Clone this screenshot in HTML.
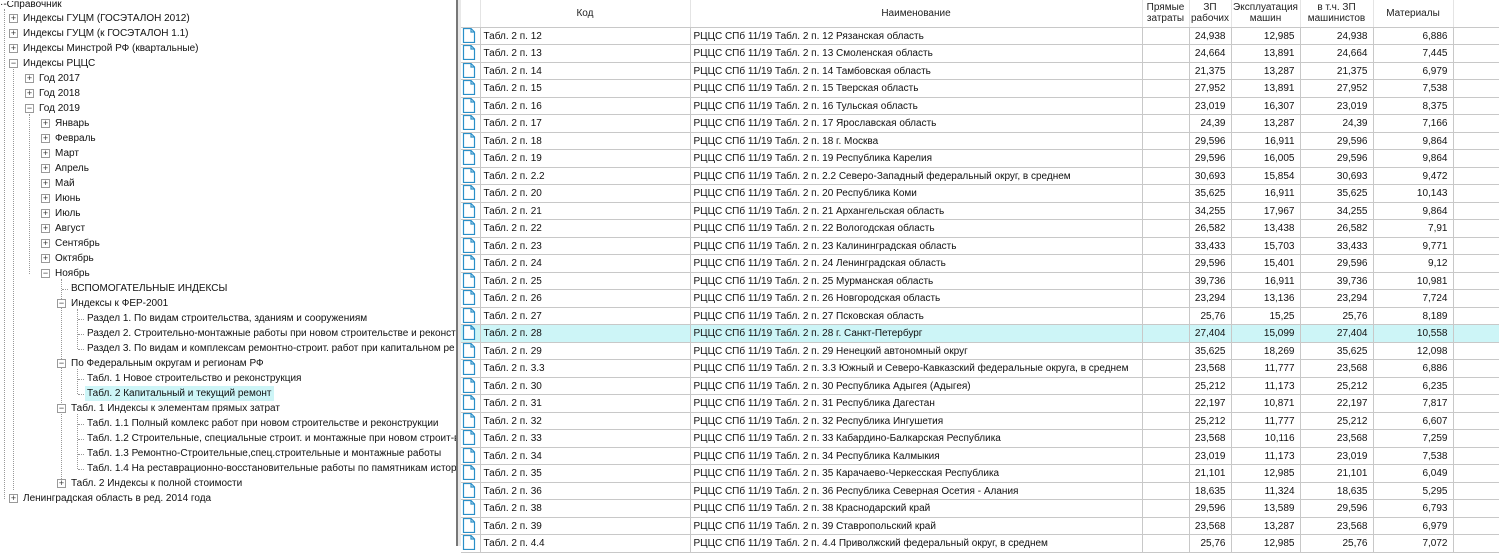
<!DOCTYPE html>
<html><head><meta charset="utf-8"><style>
*{margin:0;padding:0;box-sizing:border-box}
body{width:1499px;height:546px;overflow:hidden;background:#fff;font-family:"Liberation Sans","DejaVu Sans",sans-serif;font-size:10px;color:#111;position:relative}
#tree{position:absolute;left:0;top:1px;width:456px;height:546px;overflow:hidden}
.n{position:absolute;white-space:nowrap;height:15px;line-height:15px}
.b{position:absolute;width:9px;height:9px;border:1px solid #9a9a9a;background:#fff;font-size:9px;line-height:7px;text-align:center;color:#333}
.vl{position:absolute;border-left:1px dotted #999}
.hl{position:absolute;border-top:1px dotted #999;width:6px}
#split1{position:absolute;left:456px;top:0;width:2px;height:546px;background:#777}
#split2{position:absolute;left:458px;top:0;width:3px;height:546px;background:#e8e8e8}
#grid{position:absolute;left:461px;top:0}
table{border-collapse:collapse;table-layout:fixed;width:1038px}
th{height:27px;font-weight:normal;font-size:10px;line-height:11px;color:#222;border-right:1px solid #e4e4e4;border-bottom:1px solid #c8c8c8;background:#fff;overflow:hidden;white-space:nowrap}
td{height:17.5px;border-right:1px solid #c8c8c8;border-bottom:1px solid #c8c8c8;padding:1px 3px 0;white-space:nowrap;overflow:hidden}
td.r{text-align:right;padding-right:5px}
td.i{padding:0 1px;border-right:1px solid #c8c8c8}
tr.s td{background:#cdf5f7}
.ic{display:inline-block;width:14px;height:15px;vertical-align:middle;margin-top:-1px}
</style></head><body>
<div id="tree">
<div class="vl" style="left:4px;top:8px;height:490px"></div>
<div class="n" style="left:0;top:-4px">·-Справочник</div>
<div class="b" style="left:9px;top:13px">+</div><div class="n" style="left:23px;top:10px">Индексы ГУЦМ (ГОСЭТАЛОН 2012)</div>
<div class="b" style="left:9px;top:28px">+</div><div class="n" style="left:23px;top:25px">Индексы ГУЦМ (к ГОСЭТАЛОН 1.1)</div>
<div class="b" style="left:9px;top:43px">+</div><div class="n" style="left:23px;top:40px">Индексы Минстрой РФ (квартальные)</div>
<div class="b" style="left:9px;top:58px">−</div><div class="n" style="left:23px;top:55px">Индексы РЦЦС</div>
<div class="vl" style="left:13px;top:68px;height:421px"></div>
<div class="b" style="left:25px;top:73px">+</div><div class="n" style="left:39px;top:70px">Год 2017</div>
<div class="b" style="left:25px;top:88px">+</div><div class="n" style="left:39px;top:85px">Год 2018</div>
<div class="b" style="left:25px;top:103px">−</div><div class="n" style="left:39px;top:100px">Год 2019</div>
<div class="vl" style="left:29px;top:113px;height:160px"></div>
<div class="b" style="left:41px;top:118px">+</div><div class="n" style="left:55px;top:115px">Январь</div>
<div class="b" style="left:41px;top:133px">+</div><div class="n" style="left:55px;top:130px">Февраль</div>
<div class="b" style="left:41px;top:148px">+</div><div class="n" style="left:55px;top:145px">Март</div>
<div class="b" style="left:41px;top:163px">+</div><div class="n" style="left:55px;top:160px">Апрель</div>
<div class="b" style="left:41px;top:178px">+</div><div class="n" style="left:55px;top:175px">Май</div>
<div class="b" style="left:41px;top:193px">+</div><div class="n" style="left:55px;top:190px">Июнь</div>
<div class="b" style="left:41px;top:208px">+</div><div class="n" style="left:55px;top:205px">Июль</div>
<div class="b" style="left:41px;top:223px">+</div><div class="n" style="left:55px;top:220px">Август</div>
<div class="b" style="left:41px;top:238px">+</div><div class="n" style="left:55px;top:235px">Сентябрь</div>
<div class="b" style="left:41px;top:253px">+</div><div class="n" style="left:55px;top:250px">Октябрь</div>
<div class="b" style="left:41px;top:268px">−</div><div class="n" style="left:55px;top:265px">Ноябрь</div>
<div class="vl" style="left:61px;top:278px;height:206px"></div>
<div class="hl" style="left:62px;top:288px"></div><div class="n" style="left:71px;top:280px">ВСПОМОГАТЕЛЬНЫЕ ИНДЕКСЫ</div>
<div class="b" style="left:57px;top:298px">−</div><div class="n" style="left:71px;top:295px">Индексы к ФЕР-2001</div>
<div class="vl" style="left:77px;top:308px;height:40px"></div>
<div class="hl" style="left:78px;top:318px"></div><div class="n" style="left:87px;top:310px">Раздел 1. По видам строительства, зданиям и сооружениям</div>
<div class="hl" style="left:78px;top:333px"></div><div class="n" style="left:87px;top:325px">Раздел 2. Строительно-монтажные работы при новом строительстве и реконстр</div>
<div class="hl" style="left:78px;top:348px"></div><div class="n" style="left:87px;top:340px">Раздел 3. По видам и комплексам ремонтно-строит. работ при капитальном ре</div>
<div class="b" style="left:57px;top:358px">−</div><div class="n" style="left:71px;top:355px">По Федеральным округам и регионам РФ</div>
<div class="vl" style="left:77px;top:368px;height:25px"></div>
<div class="hl" style="left:78px;top:378px"></div><div class="n" style="left:87px;top:370px">Табл. 1 Новое строительство и реконструкция</div>
<div class="hl" style="left:78px;top:393px"></div><div class="n" style="left:85px;top:385px;background:#cdf5f7;padding:0 2px">Табл. 2 Капитальный и текущий ремонт</div>
<div class="b" style="left:57px;top:403px">−</div><div class="n" style="left:71px;top:400px">Табл. 1 Индексы к элементам прямых затрат</div>
<div class="vl" style="left:77px;top:413px;height:55px"></div>
<div class="hl" style="left:78px;top:423px"></div><div class="n" style="left:87px;top:415px">Табл. 1.1 Полный комлекс работ при новом строительстве и реконструкции</div>
<div class="hl" style="left:78px;top:438px"></div><div class="n" style="left:87px;top:430px">Табл. 1.2 Строительные, специальные строит. и монтажные при новом строит-в</div>
<div class="hl" style="left:78px;top:453px"></div><div class="n" style="left:87px;top:445px">Табл. 1.3 Ремонтно-Строительные,спец.строительные и монтажные работы</div>
<div class="hl" style="left:78px;top:468px"></div><div class="n" style="left:87px;top:460px">Табл. 1.4 На реставрационно-восстановительные работы по памятникам истор</div>
<div class="b" style="left:57px;top:478px">+</div><div class="n" style="left:71px;top:475px">Табл. 2 Индексы к полной стоимости</div>
<div class="b" style="left:9px;top:493px">+</div><div class="n" style="left:23px;top:490px">Ленинградская область в ред. 2014 года</div>
</div>
<div id="split1"></div><div id="split2"></div>
<svg width="0" height="0" style="position:absolute"><defs><symbol id="d" viewBox="0 0 14 15"><path d="M1.5 0.5H9L12.5 4V14.5H1.5Z M9 0.5V4H12.5" fill="#fff" stroke="#2a8fc8" stroke-width="1.2"/></symbol></defs></svg>
<div id="grid"><table>
<colgroup><col style="width:19px"><col style="width:210px"><col style="width:452px"><col style="width:47px"><col style="width:42px"><col style="width:69px"><col style="width:73px"><col style="width:80px"><col style="width:46px"></colgroup>
<tr><th></th><th>Код</th><th>Наименование</th><th>Прямые<br>затраты</th><th>ЗП<br>рабочих</th><th>Эксплуатация<br>машин</th><th>в т.ч. ЗП<br>машинистов</th><th>Материалы</th><th></th></tr>
<tr><td class="i"><svg class="ic"><use href="#d"/></svg></td><td>Табл. 2 п. 12</td><td>РЦЦС СПб 11/19 Табл. 2 п. 12 Рязанская область</td><td></td><td class="r">24,938</td><td class="r">12,985</td><td class="r">24,938</td><td class="r">6,886</td><td></td></tr>
<tr><td class="i"><svg class="ic"><use href="#d"/></svg></td><td>Табл. 2 п. 13</td><td>РЦЦС СПб 11/19 Табл. 2 п. 13 Смоленская область</td><td></td><td class="r">24,664</td><td class="r">13,891</td><td class="r">24,664</td><td class="r">7,445</td><td></td></tr>
<tr><td class="i"><svg class="ic"><use href="#d"/></svg></td><td>Табл. 2 п. 14</td><td>РЦЦС СПб 11/19 Табл. 2 п. 14 Тамбовская область</td><td></td><td class="r">21,375</td><td class="r">13,287</td><td class="r">21,375</td><td class="r">6,979</td><td></td></tr>
<tr><td class="i"><svg class="ic"><use href="#d"/></svg></td><td>Табл. 2 п. 15</td><td>РЦЦС СПб 11/19 Табл. 2 п. 15 Тверская область</td><td></td><td class="r">27,952</td><td class="r">13,891</td><td class="r">27,952</td><td class="r">7,538</td><td></td></tr>
<tr><td class="i"><svg class="ic"><use href="#d"/></svg></td><td>Табл. 2 п. 16</td><td>РЦЦС СПб 11/19 Табл. 2 п. 16 Тульская область</td><td></td><td class="r">23,019</td><td class="r">16,307</td><td class="r">23,019</td><td class="r">8,375</td><td></td></tr>
<tr><td class="i"><svg class="ic"><use href="#d"/></svg></td><td>Табл. 2 п. 17</td><td>РЦЦС СПб 11/19 Табл. 2 п. 17 Ярославская область</td><td></td><td class="r">24,39</td><td class="r">13,287</td><td class="r">24,39</td><td class="r">7,166</td><td></td></tr>
<tr><td class="i"><svg class="ic"><use href="#d"/></svg></td><td>Табл. 2 п. 18</td><td>РЦЦС СПб 11/19 Табл. 2 п. 18 г. Москва</td><td></td><td class="r">29,596</td><td class="r">16,911</td><td class="r">29,596</td><td class="r">9,864</td><td></td></tr>
<tr><td class="i"><svg class="ic"><use href="#d"/></svg></td><td>Табл. 2 п. 19</td><td>РЦЦС СПб 11/19 Табл. 2 п. 19 Республика Карелия</td><td></td><td class="r">29,596</td><td class="r">16,005</td><td class="r">29,596</td><td class="r">9,864</td><td></td></tr>
<tr><td class="i"><svg class="ic"><use href="#d"/></svg></td><td>Табл. 2 п. 2.2</td><td>РЦЦС СПб 11/19 Табл. 2 п. 2.2 Северо-Западный федеральный округ, в среднем</td><td></td><td class="r">30,693</td><td class="r">15,854</td><td class="r">30,693</td><td class="r">9,472</td><td></td></tr>
<tr><td class="i"><svg class="ic"><use href="#d"/></svg></td><td>Табл. 2 п. 20</td><td>РЦЦС СПб 11/19 Табл. 2 п. 20 Республика Коми</td><td></td><td class="r">35,625</td><td class="r">16,911</td><td class="r">35,625</td><td class="r">10,143</td><td></td></tr>
<tr><td class="i"><svg class="ic"><use href="#d"/></svg></td><td>Табл. 2 п. 21</td><td>РЦЦС СПб 11/19 Табл. 2 п. 21 Архангельская область</td><td></td><td class="r">34,255</td><td class="r">17,967</td><td class="r">34,255</td><td class="r">9,864</td><td></td></tr>
<tr><td class="i"><svg class="ic"><use href="#d"/></svg></td><td>Табл. 2 п. 22</td><td>РЦЦС СПб 11/19 Табл. 2 п. 22 Вологодская область</td><td></td><td class="r">26,582</td><td class="r">13,438</td><td class="r">26,582</td><td class="r">7,91</td><td></td></tr>
<tr><td class="i"><svg class="ic"><use href="#d"/></svg></td><td>Табл. 2 п. 23</td><td>РЦЦС СПб 11/19 Табл. 2 п. 23 Калининградская область</td><td></td><td class="r">33,433</td><td class="r">15,703</td><td class="r">33,433</td><td class="r">9,771</td><td></td></tr>
<tr><td class="i"><svg class="ic"><use href="#d"/></svg></td><td>Табл. 2 п. 24</td><td>РЦЦС СПб 11/19 Табл. 2 п. 24 Ленинградская область</td><td></td><td class="r">29,596</td><td class="r">15,401</td><td class="r">29,596</td><td class="r">9,12</td><td></td></tr>
<tr><td class="i"><svg class="ic"><use href="#d"/></svg></td><td>Табл. 2 п. 25</td><td>РЦЦС СПб 11/19 Табл. 2 п. 25 Мурманская область</td><td></td><td class="r">39,736</td><td class="r">16,911</td><td class="r">39,736</td><td class="r">10,981</td><td></td></tr>
<tr><td class="i"><svg class="ic"><use href="#d"/></svg></td><td>Табл. 2 п. 26</td><td>РЦЦС СПб 11/19 Табл. 2 п. 26 Новгородская область</td><td></td><td class="r">23,294</td><td class="r">13,136</td><td class="r">23,294</td><td class="r">7,724</td><td></td></tr>
<tr><td class="i"><svg class="ic"><use href="#d"/></svg></td><td>Табл. 2 п. 27</td><td>РЦЦС СПб 11/19 Табл. 2 п. 27 Псковская область</td><td></td><td class="r">25,76</td><td class="r">15,25</td><td class="r">25,76</td><td class="r">8,189</td><td></td></tr>
<tr class="s"><td class="i"><svg class="ic"><use href="#d"/></svg></td><td>Табл. 2 п. 28</td><td>РЦЦС СПб 11/19 Табл. 2 п. 28 г. Санкт-Петербург</td><td></td><td class="r">27,404</td><td class="r">15,099</td><td class="r">27,404</td><td class="r">10,558</td><td></td></tr>
<tr><td class="i"><svg class="ic"><use href="#d"/></svg></td><td>Табл. 2 п. 29</td><td>РЦЦС СПб 11/19 Табл. 2 п. 29 Ненецкий автономный округ</td><td></td><td class="r">35,625</td><td class="r">18,269</td><td class="r">35,625</td><td class="r">12,098</td><td></td></tr>
<tr><td class="i"><svg class="ic"><use href="#d"/></svg></td><td>Табл. 2 п. 3.3</td><td>РЦЦС СПб 11/19 Табл. 2 п. 3.3 Южный и Северо-Кавказский федеральные округа, в среднем</td><td></td><td class="r">23,568</td><td class="r">11,777</td><td class="r">23,568</td><td class="r">6,886</td><td></td></tr>
<tr><td class="i"><svg class="ic"><use href="#d"/></svg></td><td>Табл. 2 п. 30</td><td>РЦЦС СПб 11/19 Табл. 2 п. 30 Республика Адыгея (Адыгея)</td><td></td><td class="r">25,212</td><td class="r">11,173</td><td class="r">25,212</td><td class="r">6,235</td><td></td></tr>
<tr><td class="i"><svg class="ic"><use href="#d"/></svg></td><td>Табл. 2 п. 31</td><td>РЦЦС СПб 11/19 Табл. 2 п. 31 Республика Дагестан</td><td></td><td class="r">22,197</td><td class="r">10,871</td><td class="r">22,197</td><td class="r">7,817</td><td></td></tr>
<tr><td class="i"><svg class="ic"><use href="#d"/></svg></td><td>Табл. 2 п. 32</td><td>РЦЦС СПб 11/19 Табл. 2 п. 32 Республика Ингушетия</td><td></td><td class="r">25,212</td><td class="r">11,777</td><td class="r">25,212</td><td class="r">6,607</td><td></td></tr>
<tr><td class="i"><svg class="ic"><use href="#d"/></svg></td><td>Табл. 2 п. 33</td><td>РЦЦС СПб 11/19 Табл. 2 п. 33 Кабардино-Балкарская Республика</td><td></td><td class="r">23,568</td><td class="r">10,116</td><td class="r">23,568</td><td class="r">7,259</td><td></td></tr>
<tr><td class="i"><svg class="ic"><use href="#d"/></svg></td><td>Табл. 2 п. 34</td><td>РЦЦС СПб 11/19 Табл. 2 п. 34 Республика Калмыкия</td><td></td><td class="r">23,019</td><td class="r">11,173</td><td class="r">23,019</td><td class="r">7,538</td><td></td></tr>
<tr><td class="i"><svg class="ic"><use href="#d"/></svg></td><td>Табл. 2 п. 35</td><td>РЦЦС СПб 11/19 Табл. 2 п. 35 Карачаево-Черкесская Республика</td><td></td><td class="r">21,101</td><td class="r">12,985</td><td class="r">21,101</td><td class="r">6,049</td><td></td></tr>
<tr><td class="i"><svg class="ic"><use href="#d"/></svg></td><td>Табл. 2 п. 36</td><td>РЦЦС СПб 11/19 Табл. 2 п. 36 Республика Северная Осетия - Алания</td><td></td><td class="r">18,635</td><td class="r">11,324</td><td class="r">18,635</td><td class="r">5,295</td><td></td></tr>
<tr><td class="i"><svg class="ic"><use href="#d"/></svg></td><td>Табл. 2 п. 38</td><td>РЦЦС СПб 11/19 Табл. 2 п. 38 Краснодарский край</td><td></td><td class="r">29,596</td><td class="r">13,589</td><td class="r">29,596</td><td class="r">6,793</td><td></td></tr>
<tr><td class="i"><svg class="ic"><use href="#d"/></svg></td><td>Табл. 2 п. 39</td><td>РЦЦС СПб 11/19 Табл. 2 п. 39 Ставропольский край</td><td></td><td class="r">23,568</td><td class="r">13,287</td><td class="r">23,568</td><td class="r">6,979</td><td></td></tr>
<tr><td class="i"><svg class="ic"><use href="#d"/></svg></td><td>Табл. 2 п. 4.4</td><td>РЦЦС СПб 11/19 Табл. 2 п. 4.4 Приволжский федеральный округ, в среднем</td><td></td><td class="r">25,76</td><td class="r">12,985</td><td class="r">25,76</td><td class="r">7,072</td><td></td></tr>
</table></div>
</body></html>
